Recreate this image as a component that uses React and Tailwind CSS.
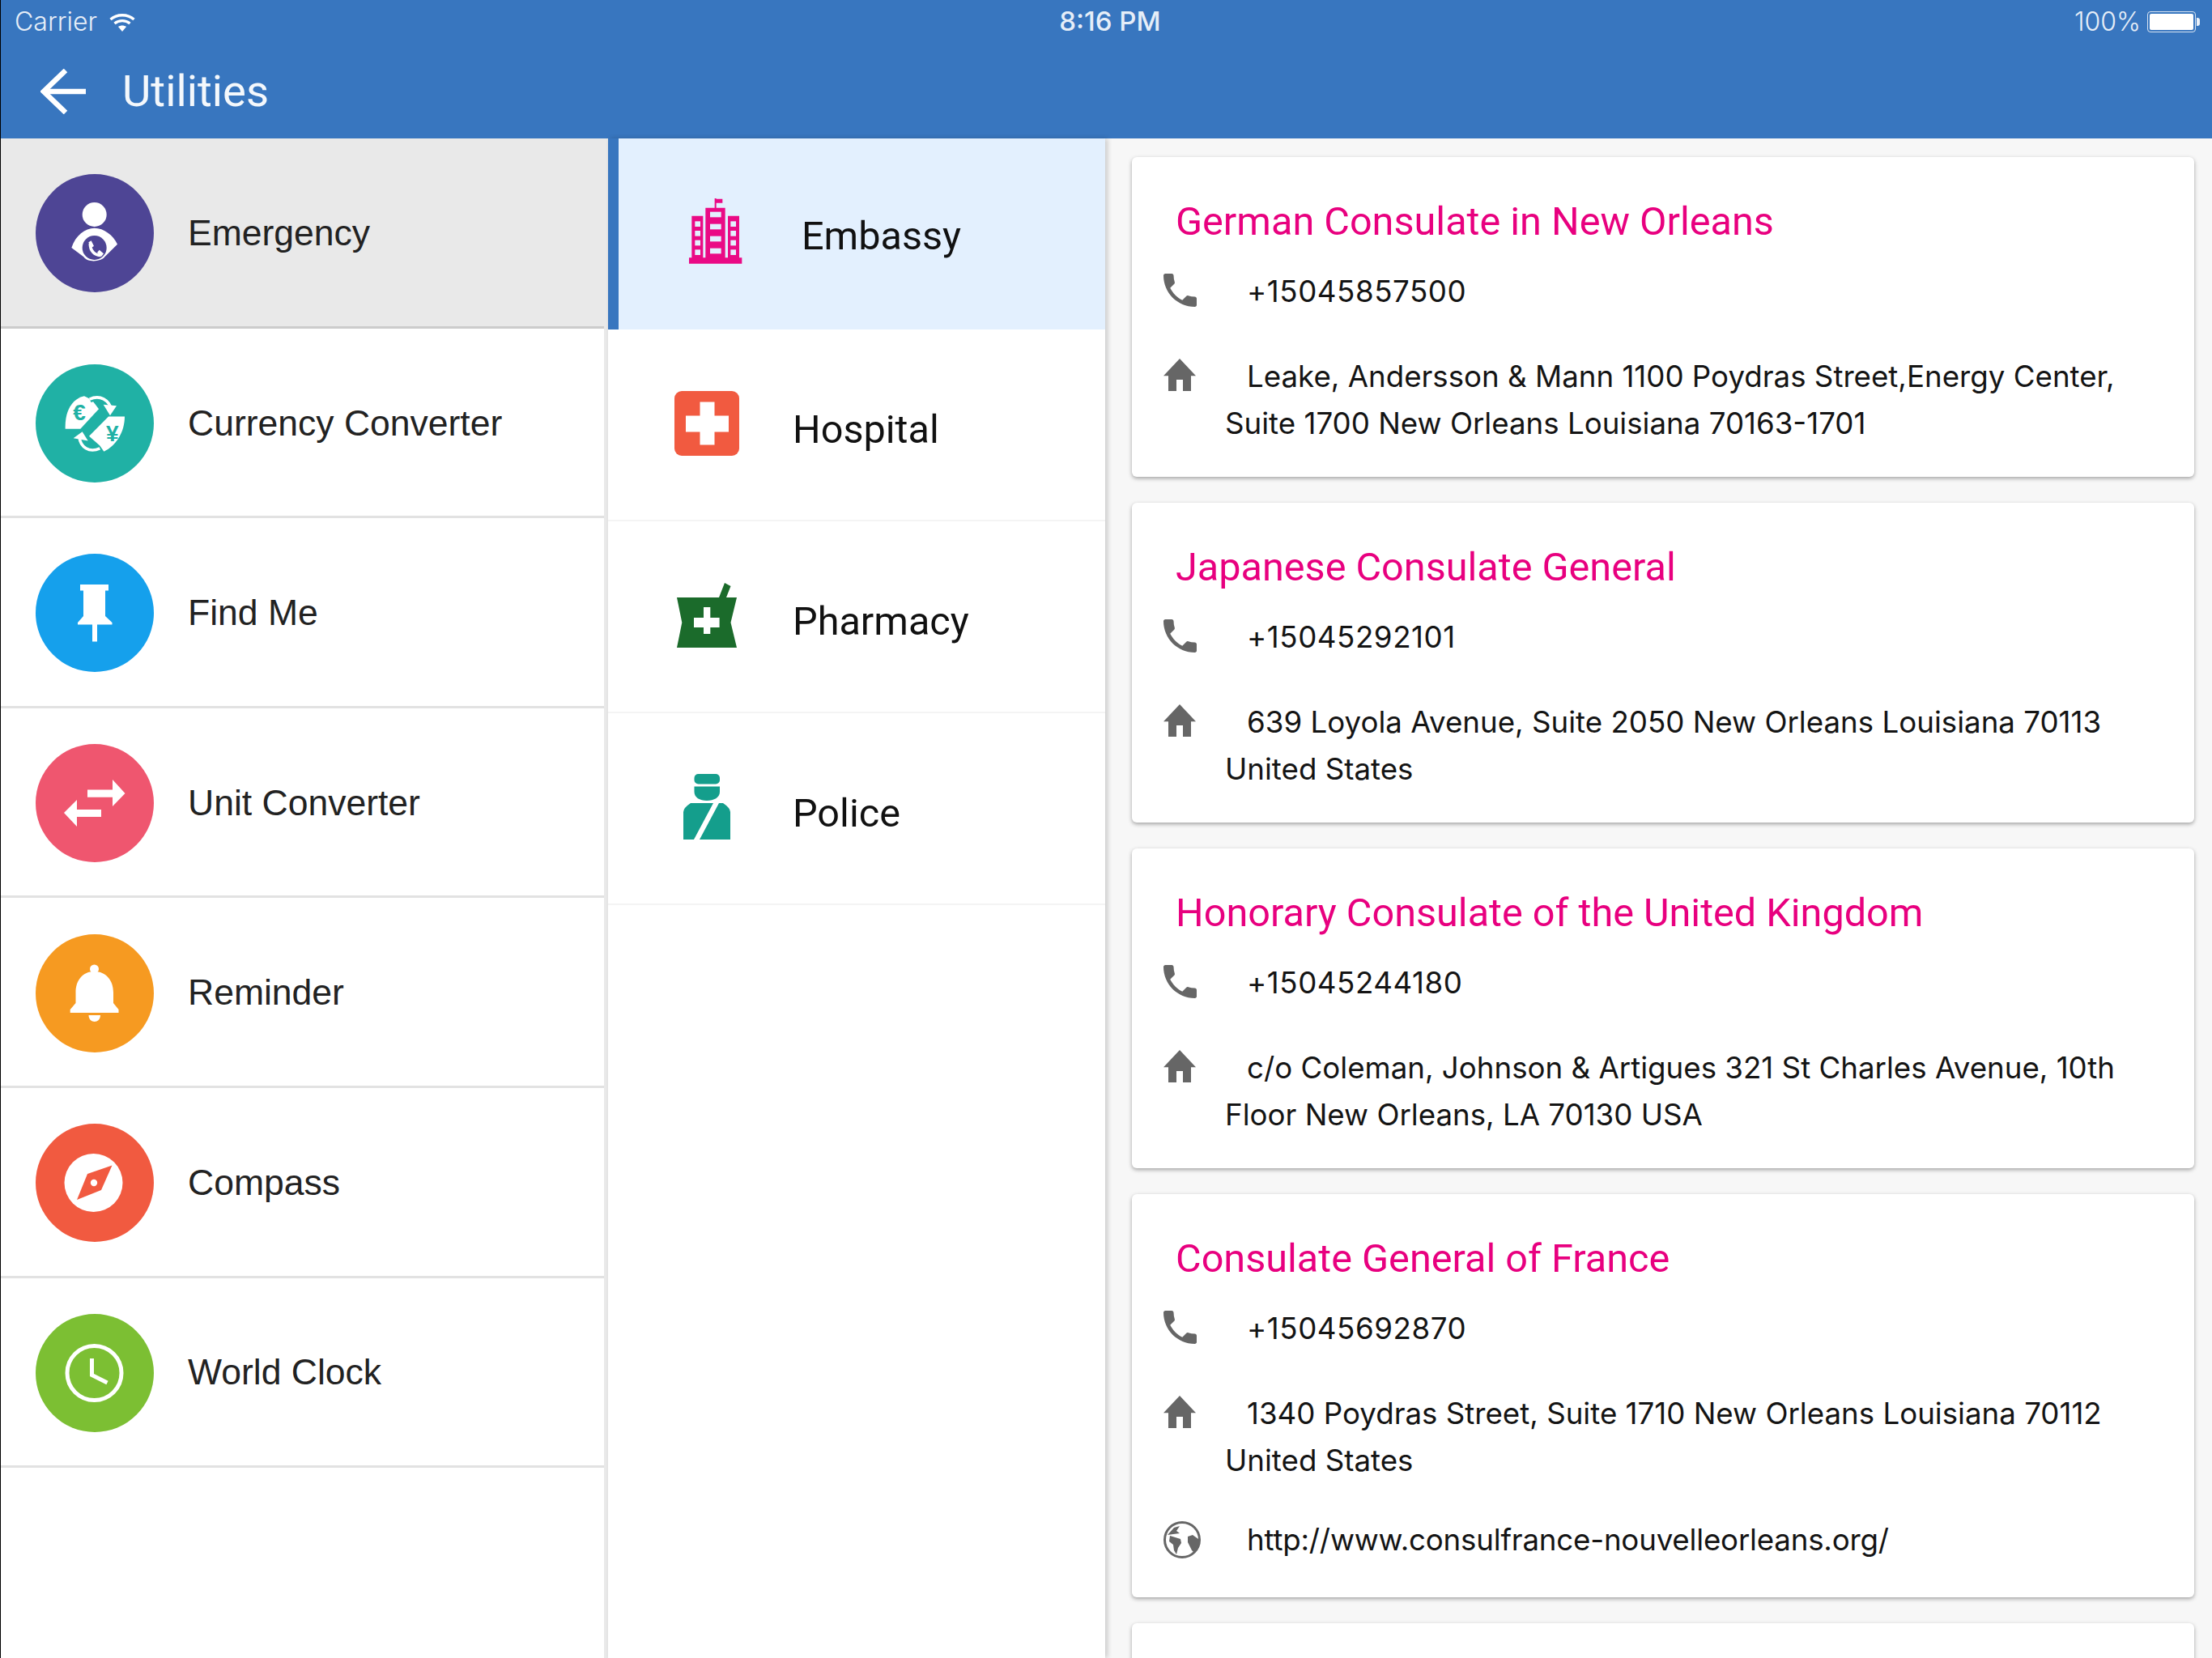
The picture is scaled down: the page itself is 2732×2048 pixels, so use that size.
const Emergency = () => (
  <svg viewBox="-78 -45 438 438" className="h-full w-full">
    <circle cx="140" cy="105" r="45" fill="#fff" />
    <path d="M55 228C70 182 105 155 140 155C175 155 210 182 225 215L178 262C165 280 115 285 100 262Z" fill="#fff" />
    <circle cx="140" cy="228" r="45" fill="#4e4595" />
    <path d="M124 212C124 240 140 256 164 256" fill="none" stroke="#fff" strokeWidth="11" />
    <path d="M118 208L128 202L138 222L128 228ZM150 246L158 236L174 250L166 260Z" fill="#fff" />
  </svg>
);
const Currency = () => (
  <svg viewBox="-48 -61.5 438 438" className="h-full w-full">
    <path d="M132 56C90 66 60 105 62 178L118 178L186 104L160 70Z" fill="#fff" />
    <path d="M282 132C282 190 250 240 205 262L190 240L150 205L222 132Z" fill="#fff" />
    <path d="M152 68C190 50 225 70 234 110" fill="none" stroke="#20b1a5" strokeWidth="26" />
    <path d="M152 68C190 50 225 70 234 110" fill="none" stroke="#fff" strokeWidth="11" />
    <path d="M203 88L252 92L228 128Z" fill="#fff" />
    <path d="M190 250C150 268 118 245 114 208" fill="none" stroke="#20b1a5" strokeWidth="26" />
    <path d="M190 250C150 268 118 245 114 208" fill="none" stroke="#fff" strokeWidth="11" />
    <path d="M92 212L125 188L146 222Z" fill="#fff" />
    <text x="114" y="145" textAnchor="middle" fontSize="84" fontWeight="700" fontFamily="'Liberation Sans', sans-serif" fill="#20b1a5">€</text>
    <text x="236" y="222" textAnchor="middle" fontSize="84" fontWeight="700" fontFamily="'Liberation Sans', sans-serif" fill="#20b1a5">¥</text>
  </svg>
);
const Pin = () => (
  <svg viewBox="0 0 146 146" className="h-full w-full">
    <path d="M55 38H90V45.5H86V77L94.5 85V87.5H76V108.5H70V87.5H52V85L59 77V45.5H55Z" fill="#fff" />
  </svg>
);
const Arrows = () => (
  <svg viewBox="0 0 146 146" className="h-full w-full">
    <path d="M64 56.5H95V44L110.5 61L95 77V65.7H64Z" fill="#fff" />
    <path d="M35 85L51 69V81H81V90H51V102Z" fill="#fff" />
  </svg>
);
const Bell = () => (
  <svg viewBox="0 0 146 146" className="h-full w-full">
    <circle cx="72.5" cy="43" r="5.5" fill="#fff" />
    <path d="M72.5 46C58 46 49.5 57 49.5 72V85L42.7 93V97H102.5V93L96 85V72C96 57 87 46 72.5 46Z" fill="#fff" />
    <path d="M65.5 100H80C80 105 76.5 108 72.75 108C69 108 65.5 105 65.5 100Z" fill="#fff" />
  </svg>
);
const Compass = () => (
  <svg viewBox="0 0 146 146" className="h-full w-full">
    <circle cx="71.5" cy="73" r="36" fill="#fff" />
    <path d="M94.5 51.5L81 82L51 94L64 62Z" fill="#f15a40" />
    <circle cx="72" cy="73" r="4.2" fill="#fff" />
  </svg>
);
const Clock = () => (
  <svg viewBox="0 0 146 146" className="h-full w-full" fill="none" stroke="#fff" strokeWidth="5">
    <circle cx="72.5" cy="73" r="33.5" />
    <path d="M69.5 55V75.5L88.5 85" />
  </svg>
);
const Embassy = () => (
  <svg viewBox="0 0 270 300" className="h-[100px] w-[90px] shrink-0">
    <path d="M36 265H46V110H88V265H97V80H131V45H137V47H160V62H137V80H170V265H180V110H222V265H232V287H36Z" fill="#ea0a85" />
    {[130, 165, 200, 235].map((y) => (
      <g key={y} fill="#e3f0fe">
        <rect x="58" y={y} width="20" height="20" />
        <rect x="190" y={y} width="20" height="20" />
      </g>
    ))}
    {[95, 140, 185, 230].map((y) => (
      <rect key={y} x="114" y={y} width="41" height="20" fill="#e3f0fe" />
    ))}
  </svg>
);
const Hospital = () => (
  <svg viewBox="0 0 80 80" className="h-[80px] w-[80px] shrink-0">
    <rect width="80" height="80" rx="9" fill="#f15a40" />
    <path d="M31.5 13.5H49.5V30.5H67V50.5H49.5V66.5H31.5V50.5H14V30.5H31.5Z" fill="#fff" />
  </svg>
);
const Pharmacy = () => (
  <svg viewBox="0 0 74 81" className="h-[81px] w-[74px] shrink-0">
    <path d="M0 19H52L59 1L66.5 5L61 19H74L66.5 50L74 81H0L6.3 50Z" fill="#1b6b2b" />
    <path d="M33 31H41.3V44H52.6V56H41.3V64H33V56H21V44H33Z" fill="#fff" />
  </svg>
);
const Police = () => (
  <svg viewBox="0 0 58 81" className="h-[81px] w-[58px] shrink-0">
    <rect x="13.5" y="0" width="31.5" height="12.5" rx="5" fill="#149e8c" />
    <path d="M13.5 15.6H45V22C45 29 38 33 29 33C20 33 13.5 29 13.5 22Z" fill="#149e8c" />
    <path d="M0 47Q0 42 9 36H37L13 81H0ZM44 36H49Q58 42 58 47V81H20Z" fill="#149e8c" />
  </svg>
);
const PhoneIcon = () => (
  <svg viewBox="3 3 18 18" className="mb-[3px] h-[41px] w-[41px]">
    <path fill="#666" d="M6.62 10.79c1.44 2.83 3.76 5.14 6.59 6.59l2.2-2.2c.27-.27.67-.36 1.02-.24 1.12.37 2.33.57 3.57.57.55 0 1 .45 1 1V20c0 .55-.45 1-1 1-9.39 0-17-7.61-17-17 0-.55.45-1 1-1h3.5c.55 0 1 .45 1 1 0 1.25.2 2.45.57 3.57.11.35.03.74-.25 1.02l-2.2 2.2z" />
  </svg>
);
const HomeIcon = () => (
  <svg viewBox="2 3 20 17" className="mb-[4px] h-[40px] w-[40px]" preserveAspectRatio="none">
    <path fill="#666" d="M10 20v-6h4v6h5v-8h3L12 3 2 12h3v8z" />
  </svg>
);
const GlobeIcon = () => (
  <svg viewBox="0 0 46 46" className="h-[46px] w-[46px]">
    <circle cx="23" cy="23" r="21.5" fill="#fff" stroke="#666" strokeWidth="3" />
    <path d="M5 17L13 8L20 6L16 12L20 15L12 16Z" fill="#666" />
    <path d="M8 18L21 22L22 27L18 33L16 41L13 36L12 29L7 25Z" fill="#666" />
    <path d="M30 19L36 17L43 22L43 30L38 39L35 36L32 30L30 26Z" fill="#666" />
  </svg>
);
const Wifi = () => (
  <svg viewBox="0 0 32 23" className="h-[23px] w-[32px]" fill="none" stroke="#fff" strokeWidth="3.4">
    <path d="M1.5 8C9.5 1 22.5 1 30.5 8" />
    <path d="M6.5 13C12 8.5 20 8.5 25.5 13" />
    <path d="M11 17C14 15 18 15 21 17L16 23Z" fill="#fff" stroke="none" />
  </svg>
);

const utilities = [
  { label: "Emergency", bg: "bg-[#4e4595]", Icon: Emergency, rowBg: "bg-[#e9e9e9]", border: "border-[#cccccc]" },
  { label: "Currency Converter", bg: "bg-[#20b1a5]", Icon: Currency, rowBg: "bg-white", border: "border-[#e2e2e2]" },
  { label: "Find Me", bg: "bg-[#15a0ec]", Icon: Pin, rowBg: "bg-white", border: "border-[#e2e2e2]" },
  { label: "Unit Converter", bg: "bg-[#ef566f]", Icon: Arrows, rowBg: "bg-white", border: "border-[#e2e2e2]" },
  { label: "Reminder", bg: "bg-[#f69a21]", Icon: Bell, rowBg: "bg-white", border: "border-[#e2e2e2]" },
  { label: "Compass", bg: "bg-[#f15a40]", Icon: Compass, rowBg: "bg-white", border: "border-[#e2e2e2]" },
  { label: "World Clock", bg: "bg-[#7cbf33]", Icon: Clock, rowBg: "bg-white", border: "border-[#e2e2e2]" },
];

const places = [
  { name: "German Consulate in New Orleans", phone: "+15045857500", address: "Leake, Andersson & Mann 1100 Poydras Street,Energy Center, Suite 1700 New Orleans Louisiana 70163-1701" },
  { name: "Japanese Consulate General", phone: "+15045292101", address: "639 Loyola Avenue, Suite 2050 New Orleans Louisiana 70113 United States" },
  { name: "Honorary Consulate of the United Kingdom", phone: "+15045244180", address: "c/o Coleman, Johnson & Artigues 321 St Charles Avenue, 10th Floor New Orleans, LA 70130 USA" },
  { name: "Consulate General of France", phone: "+15045692870", address: "1340 Poydras Street, Suite 1710 New Orleans Louisiana 70112 United States", web: "http://www.consulfrance-nouvelleorleans.org/" },
];

function InfoRow({ icon, className, textClass = "", children }) {
  return (
    <div className={`flex pl-[39px] pr-[60px] ${className}`}>
      <div className="flex h-[58px] w-[76px] shrink-0 items-center">{icon}</div>
      <p className={`indent-[27px] font-['Inter',sans-serif] text-[36.7px] leading-[58.5px] text-[#141414] ${textClass}`}>{children}</p>
    </div>
  );
}

function Card({ place }) {
  return (
    <div className={`shrink-0 rounded-[6px] bg-white shadow-[0_2px_5px_rgba(0,0,0,0.35)] pt-[50px] ${place.web ? "pb-[42px]" : "pb-[36.5px]"}`}>
      <h2 className="pl-[54px] font-['Roboto',sans-serif] text-[48.6px] leading-[60px] font-normal text-[#e8007f]">{place.name}</h2>
      <InfoRow icon={<PhoneIcon />} className="mt-[27px]" textClass="tracking-[0.55px]">{place.phone}</InfoRow>
      <InfoRow icon={<HomeIcon />} className="mt-[46px]">{place.address}</InfoRow>
      {place.web && <InfoRow icon={<GlobeIcon />} className="mt-[39px]" textClass="tracking-[-0.2px]">{place.web}</InfoRow>}
    </div>
  );
}

export default function App() {
  return (
    <div className="flex h-[2048px] w-[2732px] flex-col overflow-hidden border-l border-black bg-white">
      <header className="h-[171px] shrink-0 bg-[#3876bf] text-white">
        <div className="grid h-[54px] grid-cols-3 items-center pl-[17px] pr-[15px]">
          <div className="flex items-center gap-[15px] font-['Inter',sans-serif] font-light text-[32px] text-[#e6eef8]">
            <span>Carrier</span>
            <Wifi />
          </div>
          <div className="pl-[7px] text-center font-['Inter',sans-serif] text-[33px] font-medium text-[#e6eef8]">8:16 PM</div>
          <div className="flex items-center justify-end gap-[8px]">
            <span className="font-['Inter',sans-serif] font-light text-[32px] text-[#e6eef8]">100%</span>
            <div className="flex items-center">
              <div className="h-[26px] w-[60px] rounded-[4px] border border-white/80 p-[2px]">
                <div className="h-full w-full rounded-[2px] bg-white" />
              </div>
              <div className="ml-[1px] h-[10px] w-[4px] rounded-r-[3px] bg-white/90" />
            </div>
          </div>
        </div>
        <div className="flex h-[117px] items-center pl-[49px]">
          <svg viewBox="0 0 56 56" className="h-[56px] w-[56px]" fill="none" stroke="#fff" strokeWidth="6.5">
            <path d="M56 28H4" />
            <path d="M31 2L4 28L31 54" />
          </svg>
          <h1 className="ml-[45px] font-['Roboto',sans-serif] text-[54.5px] font-normal leading-none text-[#f4f8fc]">Utilities</h1>
        </div>
      </header>
      <main className="flex min-h-0 flex-1">
        <nav className="w-[750px] shrink-0 bg-[#e9e9e9]">
          <div className="h-full w-[745px] bg-white">
            {utilities.map(({ label, bg, Icon, rowBg, border }) => (
              <div key={label} className={`flex h-[234.6px] items-center border-b-[3px] pl-[43px] pt-[3px] ${rowBg} ${border}`}>
                <div className={`h-[146px] w-[146px] shrink-0 rounded-full ${bg}`}><Icon /></div>
                <span className="ml-[42px] font-['Liberation_Sans',sans-serif] text-[44.5px] text-[#222222]">{label}</span>
              </div>
            ))}
          </div>
        </nav>
        <section className="relative z-10 w-[614px] shrink-0 bg-white shadow-[3px_0_6px_rgba(0,0,0,0.18)]">
          <div className="flex h-[236px] items-center border-l-[13px] border-[#3876bf] bg-[#e3f0fe] pl-[80px]">
            <div className="mb-[18px] flex w-[80px] justify-center"><Embassy /></div>
            <span className="ml-[66px] mt-[7px] font-['Roboto',sans-serif] text-[48.6px] text-[#111111]">Embassy</span>
          </div>
          {[["Hospital", <Hospital />], ["Pharmacy", <Pharmacy />], ["Police", <Police />]].map(([label, icon]) => (
            <div key={label} className="flex h-[237px] items-center border-b-[2px] border-[#f4f4f4] pl-[82px]">
              <div className="mb-[4px] flex w-[80px] justify-center">{icon}</div>
              <span className="ml-[66px] mt-[14px] font-['Roboto',sans-serif] text-[48.6px] text-[#111111]">{label}</span>
            </div>
          ))}
        </section>
        <section className="flex min-w-0 flex-1 flex-col gap-[32px] overflow-hidden bg-[#f7f7f7] pl-[33px] pr-[22px] pt-[23px]">
          {places.map((p) => <Card key={p.name} place={p} />)}
          <div className="h-[200px] shrink-0 rounded-[6px] bg-white shadow-[0_2px_5px_rgba(0,0,0,0.35)]" />
        </section>
      </main>
    </div>
  );
}
